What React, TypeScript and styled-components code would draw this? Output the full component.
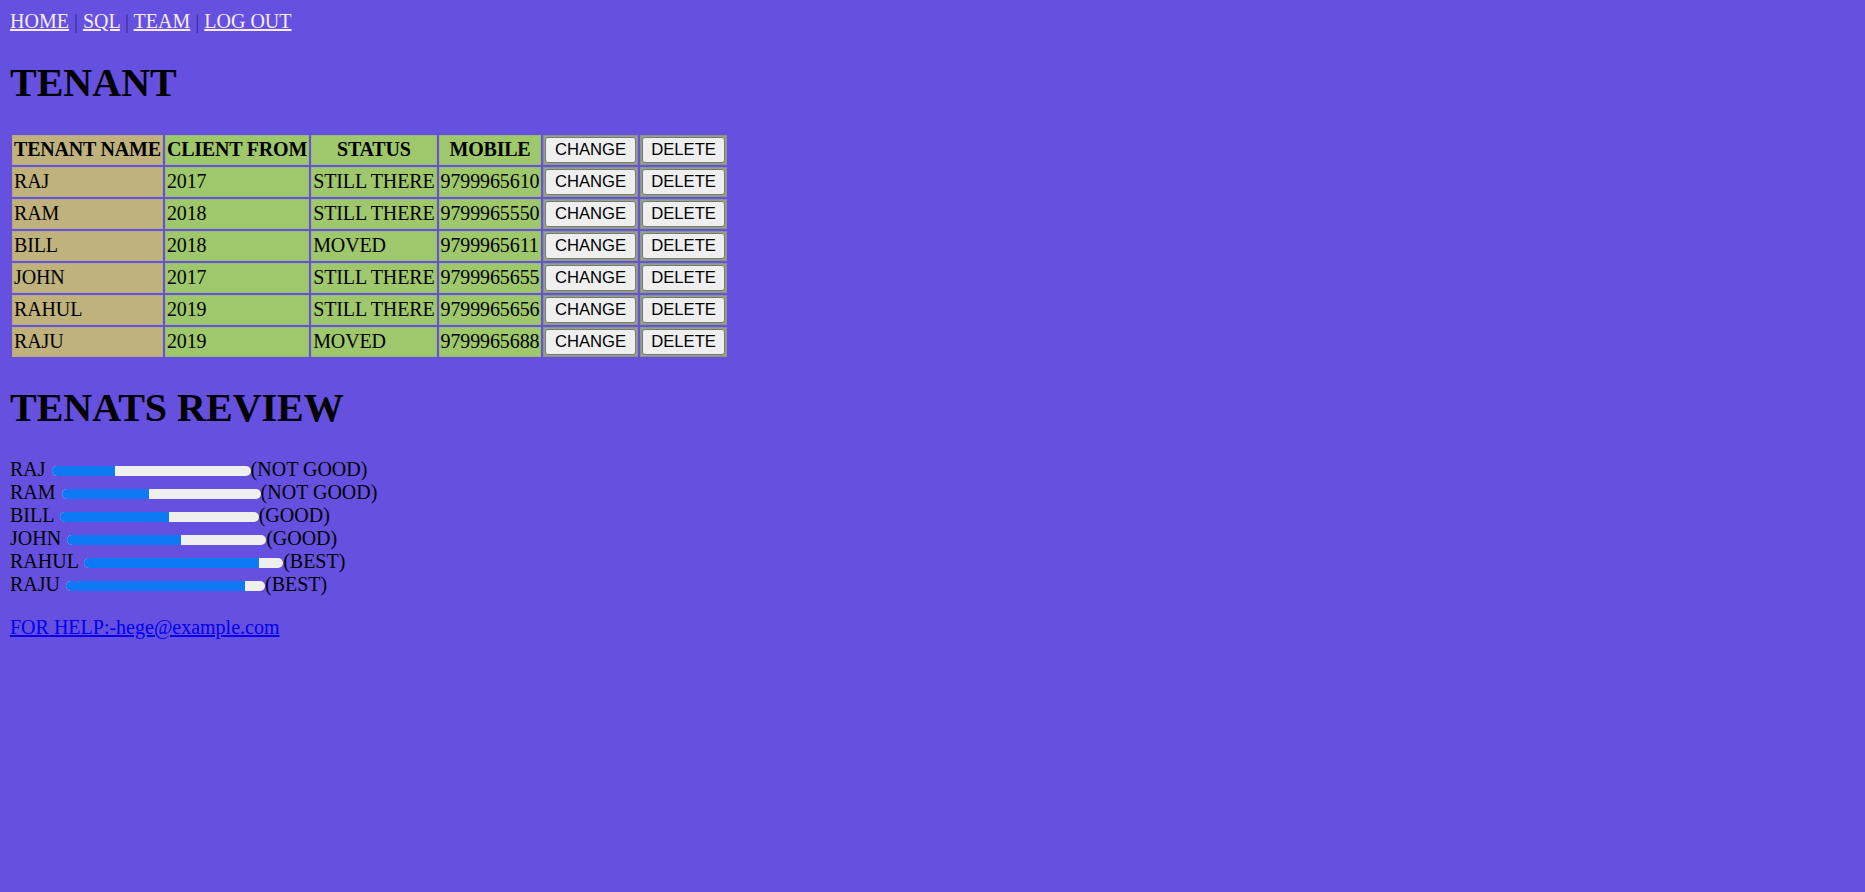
import React from "react";
import styled, { createGlobalStyle } from "styled-components";

const Global = createGlobalStyle`
  html, body { background: #6550e0; }
  body {
    margin: 10px;
    font-family: "Liberation Serif", "Times New Roman", serif;
    font-size: 20px;
    color: #000;
  }
`;

const Nav = styled.nav`
  line-height: 23px;
  color: #3a2e96;
`;

const NavLink = styled.a`
  color: #f6ecf8;
  text-decoration: underline;
`;

const Heading = styled.h1`
  font-size: 40px;
  font-weight: bold;
  margin: 26.8px 0;
  line-height: 46px;
`;

const Table = styled.table`
  border-collapse: separate;
  border-spacing: 2px;
`;

const HeadCell = styled.th<{ $tone: "tan" | "green" }>`
  background: ${(p) => (p.$tone === "tan" ? "#bfb27c" : "#9ec86b")};
  border: 1px solid ${(p) => (p.$tone === "tan" ? "#b8ab78" : "#97bf68")};
  padding: 1px;
  font-weight: bold;
  text-align: center;
  line-height: 23px;
  letter-spacing: -0.2px;
  white-space: nowrap;
`;

const Cell = styled.td<{ $tone: "tan" | "green" }>`
  background: ${(p) => (p.$tone === "tan" ? "#bfb27c" : "#9ec86b")};
  border: 1px solid ${(p) => (p.$tone === "tan" ? "#b8ab78" : "#97bf68")};
  padding: 1px;
  line-height: 23px;
  letter-spacing: -0.12px;
  white-space: nowrap;
`;

const ButtonCell = styled.td`
  background: #95a386;
  border: 1px solid #8a9580;
  padding: 1px;
  line-height: 0;
`;

const ActionButton = styled.button`
  box-sizing: border-box;
  height: 26px;
  font-family: "Liberation Sans", Arial, sans-serif;
  font-size: 16.67px;
  line-height: 19px;
  color: #000;
  background: #efefef;
  border: 1.25px solid #767676;
  border-radius: 3px;
  padding: 0 8.5px;
  cursor: pointer;
`;

const Reviews = styled.div`
  line-height: 23px;
`;

const ReviewRow = styled.div`
  white-space: nowrap;
`;

const Bar = styled.span`
  display: inline-block;
  width: 199px;
  height: 9.5px;
  margin-left: 1px;
  margin-bottom: 0.5px;
  vertical-align: baseline;
  border-radius: 5px;
  background: #efefef;
  overflow: hidden;
`;

const Fill = styled.span`
  display: block;
  height: 100%;
  background: #0d7af4;
`;

const HelpPara = styled.p`
  margin: 20px 0;
  line-height: 23px;
`;

const HelpLink = styled.a`
  color: #0000ee;
  text-decoration: underline;
`;

const tenants = [
  { name: "RAJ", from: "2017", status: "STILL THERE", mobile: "9799965610" },
  { name: "RAM", from: "2018", status: "STILL THERE", mobile: "9799965550" },
  { name: "BILL", from: "2018", status: "MOVED", mobile: "9799965611" },
  { name: "JOHN", from: "2017", status: "STILL THERE", mobile: "9799965655" },
  { name: "RAHUL", from: "2019", status: "STILL THERE", mobile: "9799965656" },
  { name: "RAJU", from: "2019", status: "MOVED", mobile: "9799965688" },
];

const reviews = [
  { name: "RAJ", value: 32, label: "(NOT GOOD)" },
  { name: "RAM", value: 44, label: "(NOT GOOD)" },
  { name: "BILL", value: 55, label: "(GOOD)" },
  { name: "JOHN", value: 57, label: "(GOOD)" },
  { name: "RAHUL", value: 88, label: "(BEST)" },
  { name: "RAJU", value: 90, label: "(BEST)" },
];

export default function App() {
  return (
    <>
      <Global />
      <Nav>
        <NavLink href="#">HOME</NavLink> | <NavLink href="#">SQL</NavLink> |{" "}
        <NavLink href="#">TEAM</NavLink> | <NavLink href="#">LOG OUT</NavLink>
      </Nav>
      <Heading>TENANT</Heading>
      <Table>
        <tbody>
          <tr>
            <HeadCell $tone="tan">TENANT NAME</HeadCell>
            <HeadCell $tone="green">CLIENT FROM</HeadCell>
            <HeadCell $tone="green">STATUS</HeadCell>
            <HeadCell $tone="green">MOBILE</HeadCell>
            <ButtonCell>
              <ActionButton>CHANGE</ActionButton>
            </ButtonCell>
            <ButtonCell>
              <ActionButton>DELETE</ActionButton>
            </ButtonCell>
          </tr>
          {tenants.map((t) => (
            <tr key={t.name}>
              <Cell $tone="tan">{t.name}</Cell>
              <Cell $tone="green">{t.from}</Cell>
              <Cell $tone="green">{t.status}</Cell>
              <Cell $tone="green">{t.mobile}</Cell>
              <ButtonCell>
                <ActionButton>CHANGE</ActionButton>
              </ButtonCell>
              <ButtonCell>
                <ActionButton>DELETE</ActionButton>
              </ButtonCell>
            </tr>
          ))}
        </tbody>
      </Table>
      <Heading>TENATS REVIEW</Heading>
      <Reviews>
        {reviews.map((r) => (
          <ReviewRow key={r.name}>
            {r.name}{" "}
            <Bar>
              <Fill style={{ width: `${r.value}%` }} />
            </Bar>
            {r.label}
          </ReviewRow>
        ))}
      </Reviews>
      <HelpPara>
        <HelpLink href="mailto:hege@example.com">FOR HELP:-hege@example.com</HelpLink>
      </HelpPara>
    </>
  );
}
